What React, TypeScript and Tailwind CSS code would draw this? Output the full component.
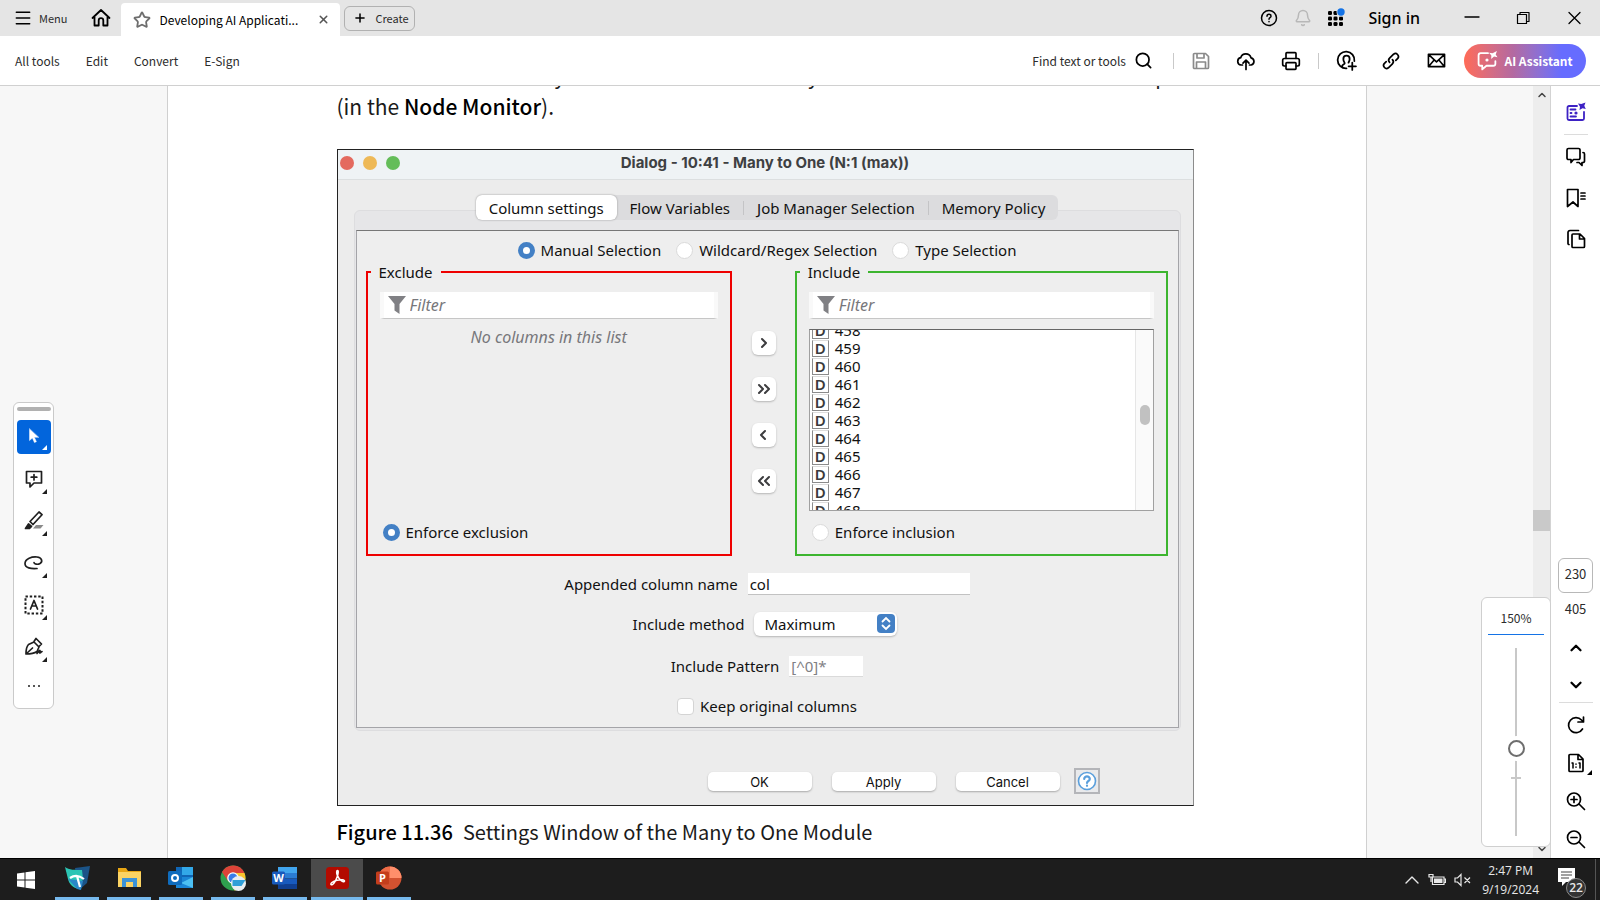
import React, { useState } from 'react';
import { Menu, Star, X, Plus, Search, Bell, Printer, ChevronUp, ChevronDown } from 'lucide-react';

type IconProps = {
  size?: number;
  box?: string;
  stroke?: number;
  className?: string;
  children: React.ReactNode;
};

const Icon: React.FC<IconProps> = ({ size = 20, box = '0 0 20 20', stroke = 1.7, className = '', children }) => (
  <svg
    width={size}
    height={size}
    viewBox={box}
    fill="none"
    stroke="currentColor"
    strokeWidth={stroke}
    strokeLinecap="round"
    strokeLinejoin="round"
    className={`shrink-0 ${className}`}
    aria-hidden="true"
  >
    {children}
  </svg>
);

const uiFont = "font-['Noto_Sans_CJK_SC','Open_Sans',sans-serif]";
const dialogFont = "font-['Noto_Sans','Open_Sans',sans-serif]";

const columns = ['458', '459', '460', '461', '462', '463', '464', '465', '466', '467', '468'];

const TitleBar: React.FC = () => (
  <header className="flex h-9 shrink-0 items-center bg-[#e5e5e5] pl-[13px] text-[#2c2c2c]">
    <button className="flex items-center gap-1.5 text-[11px]">
      <Menu size={20} strokeWidth={1.8} className="text-black" />
      Menu
    </button>
    <button aria-label="Home" className="ml-6 text-black">
      <Icon size={20} stroke={1.8}>
        <path d="M1.500 10 10 2l8.500 8M3.500 9v8.500h4.200v-5a2.300 2.300 0 0 1 4.600 0v5h4.200V9" />
      </Icon>
    </button>
    <div className="ml-2.5 flex h-[33px] w-[219px] items-center self-end rounded-t bg-white pl-3">
      <Star size={18} strokeWidth={2.4} className="text-[#6e6e6e]" />
      <span className="ml-2 flex-1 truncate text-xs leading-5 text-black">Developing AI Applicati...</span>
      <button aria-label="Close tab" className="mr-2.5 text-[#555]">
        <X size={13} strokeWidth={2.8} />
      </button>
    </div>
    <button className="ml-1 flex h-[25px] w-[71px] items-center gap-2 rounded-md border border-[#b1b1b1] pl-2 text-[11px]">
      <Plus size={14} strokeWidth={2.6} className="text-black" />
      Create
    </button>
    <div className="ml-auto flex items-center">
      <button aria-label="Help" className="mr-4 text-black">
        <Icon size={18} box="0 0 18 18" stroke={1.5}>
          <circle cx="9" cy="9" r="7.500" />
          <path d="M7 7.200c0-2.600 4-2.600 4 0C11 8.700 9 8.700 9 10.200M9 12.500v.3" />
        </Icon>
      </button>
      <button aria-label="Notifications" className="mr-3.5 text-[#b8b8b8]">
        <Bell size={18} strokeWidth={2} />
      </button>
      <button aria-label="Apps" className="mr-[22px] text-black">
        <svg width="20" height="20" viewBox="0 0 20 20" fill="currentColor" aria-hidden="true">
          {[3, 8.5, 14].map(y =>
            [2, 7.5, 13].map(x => <rect key={`${x}-${y}`} x={x} y={y} width="4" height="4" rx="1.300" />)
          )}
          <circle cx="15" cy="4" r="4.500" fill="#e5e5e5" />
          <circle cx="15" cy="4" r="3.700" fill="#1473e6" />
        </svg>
      </button>
      <button className="mr-11 font-['Noto_Sans',sans-serif] text-base leading-5 font-medium text-black">Sign in</button>
      <button aria-label="Minimize" className="mr-9 text-black">
        <Icon size={16} box="0 0 16 16" stroke={1.3}>
          <path d="M1 7h14" />
        </Icon>
      </button>
      <button aria-label="Restore" className="mr-9 text-black">
        <Icon size={15} box="0 0 15 15" stroke={1.2}>
          <path d="M1.500 3.500h9v9h-9zM4 3.500v-2h9v9h-2.500" />
        </Icon>
      </button>
      <button aria-label="Close" className="mr-[18px] text-black">
        <Icon size={15} box="0 0 15 15" stroke={1.3}>
          <path d="m2 1.500 11 11M13 1.500l-11 11" />
        </Icon>
      </button>
    </div>
  </header>
);

const Toolbar: React.FC = () => (
  <div className="flex h-[50px] shrink-0 items-center border-b border-[#d0d0d0] bg-white pr-3.5 pl-[15px] text-xs text-[#2c2c2c]">
    <nav className="flex gap-[26px]">
      <button>All tools</button>
      <button>Edit</button>
      <button>Convert</button>
      <button>E-Sign</button>
    </nav>
    <div className="ml-auto flex items-center text-black">
      <button className="flex items-center gap-2 text-[#2c2c2c]">
        Find text or tools
        <Search size={19} strokeWidth={2.2} className="text-black" />
      </button>
      <span className="mr-[17px] ml-5 h-4 w-px bg-[#c9c9c9]" />
      <button aria-label="Save" className="text-[#8a8a8a]">
        <Icon>
          <path d="M2.500 3.500a1 1 0 0 1 1-1h11l3 3v11a1 1 0 0 1-1 1h-13a1 1 0 0 1-1-1zM6 2.500V7h7V2.500M5.500 17.500V11h9v6.500" />
        </Icon>
      </button>
      <button aria-label="Upload" className="ml-[25px]">
        <Icon>
          <path d="M6.500 14H5A3.700 3.700 0 0 1 4.700 6.700 5.400 5.400 0 0 1 15 6.800 3.700 3.700 0 0 1 15.200 14h-1.700M10 18.500V9.500M7 12.200l3-3 3 3" />
        </Icon>
      </button>
      <button aria-label="Print" className="ml-[25px]">
        <Printer size={20} strokeWidth={2} />
      </button>
      <span className="mx-[17px] h-4 w-px bg-[#c9c9c9]" />
      <button aria-label="Share">
        <Icon size={21}>
          <path d="M10 17.500a8 8 0 1 1 7.500-7M6 16v-1.200c0-.8 2.300-1.400 2.300-2.300 0-.6-1.300-1.500-1.300-4C7 4.300 13 4.300 13 8.500c0 2-.9 2.900-1.100 3.600M15.500 12v7M12 15.500h7" />
        </Icon>
      </button>
      <button aria-label="Link" className="ml-6">
        <Icon>
          <path d="M8.600 11.400a3 3 0 0 1 0-4.200l4-4a3 3 0 0 1 4.200 4.200l-2 2M11.400 8.600a3 3 0 0 1 0 4.200l-4 4a3 3 0 0 1-4.200-4.200l2-2" />
        </Icon>
      </button>
      <button aria-label="Email" className="ml-[26px]">
        <Icon size={19}>
          <path d="M1.500 3.500h17v13h-17zM2 4l8 7.500L18 4M2 16l5.500-6.500M18 16l-5.500-6.500" />
        </Icon>
      </button>
      <button className="ml-[18px] flex h-[34px] w-[122px] items-center justify-center gap-1.5 rounded-full bg-linear-to-r from-[#ff6a55] via-[#b469a0] via-40% to-[#666cff] to-80% text-xs font-bold text-white">
        <Icon size={21}>
          <path d="M10.500 3h-7a2 2 0 0 0-2 2v8a2 2 0 0 0 2 2H5v3.500L9 15h6.500a2 2 0 0 0 2-2v-2.500" />
          <path d="m19 1-1.200 3.200L19.500 7l-3.300-.7L13.500 8.500l.2-3.300L11.500 2.500l3.300.6z" fill="currentColor" stroke="none" />
          <circle cx="9.500" cy="9.500" r="1.500" fill="currentColor" stroke="none" />
        </Icon>
        AI Assistant
      </button>
    </div>
  </div>
);

const paletteTools = [
  {
    label: 'Comment',
    art: <path d="M2.500 2.500h15v11.500H10L6 18v-4H2.500zM10 5.500v5.500M7.200 8.200h5.600" />
  },
  {
    label: 'Highlight',
    art: (
      <>
        <path d="M9 17.500 12 14h7.500l-3 3.500z" fill="#8a8a8a" stroke="none" />
        <path d="m6 10.500 9-9.500 3 2.700-9 9.800z" />
        <path d="M4.500 13 7.500 15.500 5.500 17.500H1.500z" fill="currentColor" />
      </>
    )
  },
  {
    label: 'Draw',
    art: <path d="M13 15.500C7 16 1 15 1 10.500 1 5.500 8 3.500 13 4s6 4.500 3 6.500c-2.500 1.500-6 .5-6-1" />
  },
  {
    label: 'Text box',
    art: (
      <>
        <path d="M1.500 1.500h17v17h-17z" strokeDasharray="2.400 1.850" strokeLinecap="butt" strokeWidth="2" />
        <path d="m6.500 14 3.500-8.500 3.500 8.500M7.700 11h4.600" />
      </>
    )
  },
  {
    label: 'Sign',
    art: (
      <path d="M2 17c0-4 .5-7.500 2.500-9.500L10 5l5 5-2 4.500C10 16.500 6 17 2 17l6.500-6M10 4.500l2-3 5.500 5.500-2.500 2.500M13 16.500c2-2 2.500-3.500 3-3s-1 2.500 0 2.500 1-1.500 2-1.500" />
    )
  }
];

const ToolPalette: React.FC = () => (
  <div className="absolute top-[316px] left-[13px] flex w-[41px] flex-col items-center rounded-md border border-[#cacaca] bg-white pb-1 text-[#1f1f1f]">
    <span className="mt-1 h-1 w-[34px] rounded-full bg-[#b1b1b1]" />
    <button aria-label="Select" className="relative mt-[9px] mb-1 flex size-[34px] items-center justify-center rounded-sm bg-[#0265dc] text-white">
      <Icon size={18}>
        <path d="M5 1v13l3.200-2.800 2.300 5 2.200-1-2.300-4.800H15z" fill="currentColor" strokeWidth="0.500" />
      </Icon>
      <svg width="5" height="5" className="absolute right-1 bottom-1" aria-hidden="true">
        <path d="M5 0v5H0z" fill="currentColor" />
      </svg>
    </button>
    {paletteTools.map(tool => (
      <button key={tool.label} aria-label={tool.label} className="relative flex h-[42px] w-[34px] items-center justify-center">
        <Icon size={20}>{tool.art}</Icon>
        <svg width="5" height="5" className="absolute right-1 bottom-1.5" aria-hidden="true">
          <path d="M5 0v5H0z" fill="currentColor" />
        </svg>
      </button>
    ))}
    <button aria-label="More tools" className="flex h-9 items-center">
      <svg width="14" height="4" fill="currentColor" aria-hidden="true">
        <circle cx="2" cy="2" r="1" />
        <circle cx="7" cy="2" r="1" />
        <circle cx="12" cy="2" r="1" />
      </svg>
    </button>
  </div>
);

const ZoomPopup: React.FC = () => {
  const [zoom, setZoom] = useState(46);

  return (
    <div className="absolute right-0 bottom-[11px] flex h-[250px] w-[70px] translate-x-px flex-col items-center rounded-md border border-[#cfcfcf] bg-white">
      <input
        aria-label="Zoom level"
        defaultValue="150%"
        className="mt-2 h-[29px] w-14 border-b border-[#1473e6] pb-1.5 text-center text-xs text-[#2c2c2c] outline-none"
      />
      <div className="relative mt-[13px] flex">
        <span className="absolute top-[129px] left-[4px] h-0.5 w-2.5 bg-[#c8c8c8]" />
        <input
          type="range"
          aria-label="Zoom"
          value={zoom}
          onChange={e => setZoom(Number(e.target.value))}
          className="relative h-[188px] w-[18px] appearance-none bg-[linear-gradient(#c8c8c8,#c8c8c8)] bg-[length:2px_100%] bg-center bg-no-repeat [direction:rtl] [writing-mode:vertical-lr] [&::-webkit-slider-thumb]:size-[17px] [&::-webkit-slider-thumb]:appearance-none [&::-webkit-slider-thumb]:rounded-full [&::-webkit-slider-thumb]:border-2 [&::-webkit-slider-thumb]:border-[#6e6e6e] [&::-webkit-slider-thumb]:bg-white [&::-webkit-slider-thumb]:shadow-[0_0_0_4px_white]"
        />
      </div>
    </div>
  );
};

type RadioProps = {
  name: string;
  label: string;
  checked: boolean;
  onChange: () => void;
};

const Radio: React.FC<RadioProps> = ({ name, label, checked, onChange }) => (
  <label className="flex h-5 items-center gap-1.5">
    <input
      type="radio"
      name={name}
      checked={checked}
      onChange={onChange}
      className="size-[17px] appearance-none rounded-full border border-[#dadada] bg-white checked:border-[5px] checked:border-[#4380c5]"
    />
    {label}
  </label>
);

const FilterBox: React.FC<{ label: string }> = ({ label }) => (
  <div className="flex h-[27px] items-center border-x-4 border-b border-x-[#f9f9f9] border-b-[#c6c6c6] bg-white pl-1">
    <svg width="18" height="18" viewBox="0 0 18 18" fill="#808084" className="shrink-0" aria-hidden="true">
      <path d="M0 0h18l-6.500 8v10L6.500 14.500V8z" />
    </svg>
    <input
      aria-label={label}
      placeholder="Filter"
      className="ml-1 w-full min-w-0 text-base outline-none placeholder:text-[#77777b] placeholder:italic"
    />
  </div>
);

const MoveButton: React.FC<{ label: string; d: string }> = ({ label, d }) => (
  <button aria-label={label} className="flex size-6 items-center justify-center rounded-md bg-white text-[#3c3c3e] shadow-[0_1px_2px_#b5b5b5]">
    <Icon size={16} box="0 0 16 16" stroke={2}>
      <path d={d} />
    </Icon>
  </button>
);

const tabs = ['Column settings', 'Flow Variables', 'Job Manager Selection', 'Memory Policy'];

const SettingsDialog: React.FC = () => {
  const [tab, setTab] = useState(tabs[0]);
  const [mode, setMode] = useState('manual');
  const [enforce, setEnforce] = useState('exclusion');
  const [columnName, setColumnName] = useState('col');
  const [keep, setKeep] = useState(false);

  return (
    <section className={`mt-7 border border-[#222] border-r-[#8c8c8c] bg-[#ececec] ${dialogFont} text-[15px] leading-5 text-[#111]`}>
      <div className="relative flex h-[30px] items-center justify-center border-b border-[#dcdfe0] bg-[#eff3f5] pb-1">
        <div className="absolute left-0.5 flex gap-[9px]">
          <button aria-label="Close dialog" className="size-3.5 rounded-full bg-[#e46a5f]" />
          <button aria-label="Minimize dialog" className="size-3.5 rounded-full bg-[#eeb957]" />
          <button aria-label="Zoom dialog" className="size-3.5 rounded-full bg-[#64bd59]" />
        </div>
        <h2 className="font-['Inter',sans-serif] text-[15px] font-bold text-[#3e4042]">Dialog - 10:41 - Many to One (N:1 (max))</h2>
      </div>

      <div className="flex flex-col pt-[15px] pr-3 pl-4">
        <div role="tablist" className="z-10 -mb-2.5 flex h-[25px] items-center self-center rounded-md bg-[#dcdcde]">
          {tabs.map((name, i) => (
            <React.Fragment key={name}>
              {i > 1 && <span className="h-3.5 w-px bg-[#c4c4c6]" />}
              <button
                role="tab"
                aria-selected={tab === name}
                onClick={() => setTab(name)}
                className={`h-[25px] rounded-md px-[13px] ${tab === name ? 'bg-white shadow-[0_0_2px_#8e8e8e]' : ''}`}
              >
                {name}
              </button>
            </React.Fragment>
          ))}
        </div>

        <div className="rounded-md border border-[#dddddf] bg-[#e6e6e8] px-px pt-[19px] pb-0.5">
          <div className="border border-[#a4a4a8] border-t-[#777] bg-[#eeeeee] pt-[9px] pb-[9px]">
            <div className="flex justify-center gap-[15px]">
              <Radio name="mode" label="Manual Selection" checked={mode === 'manual'} onChange={() => setMode('manual')} />
              <Radio name="mode" label="Wildcard/Regex Selection" checked={mode === 'wildcard'} onChange={() => setMode('wildcard')} />
              <Radio name="mode" label="Type Selection" checked={mode === 'type'} onChange={() => setMode('type')} />
            </div>

            <div className="mt-0.5 flex pr-2.5 pl-[9px]">
              <fieldset className="min-w-0 flex-[366] border-2 border-[#ee0000] px-3 pb-3">
                <legend className="ml-[-9px] px-2">Exclude</legend>
                <div className="pt-2.5">
                  <FilterBox label="Filter excluded columns" />
                  <p className="h-[203px] pt-2 text-center text-base leading-5 text-[#77777b] italic">No columns in this list</p>
                  <div className="pl-[3px]">
                    <Radio name="enforce" label="Enforce exclusion" checked={enforce === 'exclusion'} onChange={() => setEnforce('exclusion')} />
                  </div>
                </div>
              </fieldset>

              <div className="flex w-[63px] flex-col items-center gap-[22px] pt-[69px] pl-0.5">
                <MoveButton label="Include selected" d="m6 4 4 4-4 4" />
                <MoveButton label="Include all" d="m3 4 4 4-4 4M9 4l4 4-4 4" />
                <MoveButton label="Exclude selected" d="M9 4 5 8l4 4" />
                <MoveButton label="Exclude all" d="M7 4 3 8l4 4M13 4 9 8l4 4" />
              </div>

              <fieldset className="min-w-0 flex-[373] border-2 border-[#3db52f] px-3 pb-3">
                <legend className="ml-[-9px] px-2">Include</legend>
                <div className="pt-2.5">
                  <FilterBox label="Filter included columns" />
                  <div className="mt-2.5 mb-[11px] flex h-[182px] overflow-hidden border border-[#a0a0a0] border-t-[#666] bg-white">
                    <ul className="-mt-[9px] flex-1 pl-0.5">
                      {columns.map(col => (
                        <li key={col} className="flex h-[18px] items-center gap-1.5">
                          <span className="flex h-[17px] w-[17px] items-center justify-center border border-[#8b8b8b] border-t-[#ddd] text-[15px] font-semibold text-[#3a3a3c]">
                            D
                          </span>
                          {col}
                        </li>
                      ))}
                    </ul>
                    <div className="w-[18px] border-l border-[#e6e6e6] bg-[#fafafa] pt-[75px] pl-1">
                      <div className="h-5 w-2.5 rounded-full bg-[#c1c1c1]" />
                    </div>
                  </div>
                  <div className="pl-[3px]">
                    <Radio name="enforce" label="Enforce inclusion" checked={enforce === 'inclusion'} onChange={() => setEnforce('inclusion')} />
                  </div>
                </div>
              </fieldset>
            </div>

            <div className="mt-4 flex flex-col items-center gap-4">
              <label className="flex h-6 items-center gap-2.5">
                Appended column name
                <input
                  value={columnName}
                  onChange={e => setColumnName(e.target.value)}
                  className="h-[22px] w-[222px] border-b border-[#c2c2c2] bg-white px-0.5 outline-none"
                />
              </label>
              <label className="flex h-6 items-center gap-2.5 pr-1">
                Include method
                <span className="relative">
                  <select className="block h-6 w-[143px] appearance-none rounded-md bg-white pl-2.5 shadow-[0_1px_2px_#b5b5b5] outline-none">
                    <option>Maximum</option>
                    <option>Minimum</option>
                    <option>Mean</option>
                  </select>
                  <svg width="18" height="19" viewBox="0 0 18 19" className="pointer-events-none absolute top-0.5 right-0.5" aria-hidden="true">
                    <rect width="18" height="19" rx="4" fill="#4380c5" />
                    <path d="M5.500 7.500 9 4l3.500 3.500M5.500 11.500 9 15l3.500-3.500" fill="none" stroke="#fff" strokeWidth="1.800" strokeLinecap="round" />
                  </svg>
                </span>
              </label>
              <label className="mt-0.5 flex h-6 items-center gap-2.5">
                Include Pattern
                <input
                  disabled
                  value="[^0]*"
                  className="h-[21px] w-[74px] border-b border-[#dadada] bg-white px-0.5 text-[#808084]"
                />
              </label>
              <label className="flex h-6 items-center gap-1.5">
                <input
                  type="checkbox"
                  checked={keep}
                  onChange={e => setKeep(e.target.checked)}
                  className="size-[17px] appearance-none rounded border border-[#d4d4d4] bg-white checked:bg-[#4380c5]"
                />
                Keep original columns
              </label>
            </div>
          </div>
        </div>
      </div>

      <div className="mt-[37px] flex items-center justify-end pr-[93px] pb-[11px] font-['Inter',sans-serif] text-[13px]">
        {['OK', 'Apply', 'Cancel'].map(name => (
          <button key={name} className="mr-5 h-[19px] w-[104px] rounded-[5px] bg-white shadow-[0_1px_2px_#a8a8a8]">
            {name}
          </button>
        ))}
        <a href="#help" aria-label="Dialog help" className="ml-[-6px] flex size-[26px] items-center justify-center border-2 border-[#b4b5b9] bg-[#e9eaec] text-[#5a9fdc]">
          <Icon size={20} stroke={1.6}>
            <circle cx="10" cy="10" r="8.500" fill="#fff" />
            <path d="M7.200 8c0-3.600 5.600-3.600 5.600 0 0 2-2.800 2-2.800 4M10 14.500v.3" strokeWidth="2.200" />
          </Icon>
        </a>
      </div>
    </section>
  );
};

const RightRail: React.FC = () => (
  <aside className="flex w-[50px] shrink-0 flex-col items-center border-l border-[#d3d3d3] bg-white pt-4 pb-[9px] text-black">
    <button aria-label="Generative summary" className="text-[#3d22c4]">
      <Icon size={20} stroke={1.8}>
        <path d="M11 4H3a1.500 1.500 0 0 0-1.500 1.500v11A1.500 1.500 0 0 0 3 18h13.500a1.500 1.500 0 0 0 1.500-1.500V10M4.500 7.500h5M4.500 11h1M4.500 14.500H10" />
        <path d="m19.500.500-1.200 3.200L19.800 7l-3.300-.7-3 1.700.5-3.200L12 1.500l3.300.6z" fill="currentColor" stroke="none" />
        <circle cx="10" cy="11" r="1.600" fill="currentColor" stroke="none" />
      </Icon>
    </button>
    <span className="mt-3 h-px w-6 bg-[#dcdcdc]" />
    <button aria-label="Comments" className="mt-3">
      <Icon size={20}>
        <path d="M2.500 1.500h10a1.500 1.500 0 0 1 1.500 1.500v8a1.500 1.500 0 0 1-1.500 1.500H7.500L5 15.500v-3H2.500A1.500 1.500 0 0 1 1 11V3a1.500 1.500 0 0 1 1.500-1.500zM17 5.500a1.500 1.500 0 0 1 1.500 1.500v7a1.500 1.500 0 0 1-1.500 1.500h-1v3L13 15.500h-2" />
      </Icon>
    </button>
    <button aria-label="Bookmarks" className="mt-[21px]">
      <Icon size={20}>
        <path d="M1.500 1.500h10.500v17l-5-4.500-5.500 4.500zM15 5h4M15 8h4M15 11h4" />
      </Icon>
    </button>
    <button aria-label="Pages" className="mt-[21px]">
      <Icon size={20}>
        <path d="M7 5h7l4.500 4.500v8a1 1 0 0 1-1 1H7a1 1 0 0 1-1-1V6a1 1 0 0 1 1-1zM13.500 5v5h5M3 15.500a1 1 0 0 1-1-1v-11a2 2 0 0 1 2-2h8.500" />
      </Icon>
    </button>

    <input
      aria-label="Page number"
      defaultValue="230"
      className="mt-auto h-[35px] w-[35px] rounded-md border border-[#b8b8b8] pb-1 text-center text-[13px] text-[#2c2c2c] outline-none"
    />
    <span className="mt-1.5 text-[13px] leading-5 text-[#2c2c2c]">405</span>
    <button aria-label="Previous page" className="mt-5">
      <ChevronUp size={18} strokeWidth={3} />
    </button>
    <button aria-label="Next page" className="mt-[19px]">
      <ChevronDown size={18} strokeWidth={3} />
    </button>
    <span className="mt-2 h-px w-[34px] bg-[#dcdcdc]" />
    <button aria-label="Rotate" className="mt-3">
      <Icon size={20} stroke={1.7}>
        <path d="M16.500 14A7.500 7.500 0 1 1 15.500 5l1.500 1.500M17.500 2v5h-5.500" />
      </Icon>
    </button>
    <button aria-label="Actual size" className="relative mt-[18px]">
      <Icon size={20}>
        <path d="M3 2.500A1 1 0 0 1 4 1.500h8.500L17 6v11.500a1 1 0 0 1-1 1H4a1 1 0 0 1-1-1zM12 1.500v5h5" />
        <path d="M6 10h1v5M13 10h1v5M10 11v.2M10 14v.2" strokeWidth="1.500" />
      </Icon>
      <svg width="5" height="5" className="absolute -right-1.5 -bottom-0.5" aria-hidden="true">
        <path d="M5 0v5H0z" />
      </svg>
    </button>
    <button aria-label="Zoom in" className="mt-[18px]">
      <Icon size={20}>
        <path d="M14.500 8.500a6.500 6.500 0 1 1-13 0 6.500 6.500 0 0 1 13 0zM13 13l5.500 5.500M8 5.500v6M5 8.500h6" />
      </Icon>
    </button>
    <button aria-label="Zoom out" className="mt-[18px]">
      <Icon size={20}>
        <path d="M14.500 8.500a6.500 6.500 0 1 1-13 0 6.500 6.500 0 0 1 13 0zM13 13l5.500 5.500M5 8.500h6" />
      </Icon>
    </button>
  </aside>
);

const taskApps = [
  {
    label: 'Folder manager',
    art: (
      <>
        <path d="M11 3 26 1l-3 17-8 7z" fill="#1b5488" />
        <path d="M1 2c4 3 10 3 17 3l1 9-4 10C9 23 5 19 4 14z" fill="#2cc5b4" />
        <path d="m4 14 9 10 4 1 2-9z" fill="#2a87c8" />
        <path d="M6 13c4-3 9-3 14 1M13 11l3 11" stroke="#fff" strokeWidth="2.200" fill="none" />
      </>
    )
  },
  {
    label: 'File Explorer',
    art: (
      <>
        <path d="M2 3h8l2 3h13v16H2z" fill="#e8a614" />
        <path d="M2 7h23v15H2z" fill="#fbd363" />
        <path d="M6 22v-9h15v9h-4v-5h-7v5z" fill="#3c93d6" />
      </>
    )
  },
  {
    label: 'Outlook',
    art: (
      <>
        <path d="M8 2h17v21H8z" fill="#1066b5" />
        <path d="M14 2h11v8H14z" fill="#32a8e8" />
        <path d="M8 12h17v11H8z" fill="#1a86d6" />
        <path d="m25 12-12 6 12 5z" fill="#4cc0f2" />
        <rect x="0" y="6" width="14" height="14" rx="1.500" fill="#0f6cbd" />
        <circle cx="7" cy="13" r="3" fill="none" stroke="#fff" strokeWidth="2" />
      </>
    )
  },
  {
    label: 'Chrome',
    art: (
      <>
        <circle cx="13" cy="13" r="12.500" fill="#2ea04e" />
        <path d="M2 7a12.500 12.500 0 0 1 22.500 1H13l-5 8z" fill="#dd4338" />
        <path d="M24.500 8A12.500 12.500 0 0 1 14 25.500l5-12L16 8z" fill="#fbc42d" />
        <circle cx="13" cy="13" r="5.800" fill="#fff" />
        <circle cx="13" cy="13" r="4.500" fill="#3a7de8" />
        <circle cx="18.500" cy="18.500" r="7.500" fill="#e9eef1" />
        <path d="M12.500 15h13l-4 6h-9z" fill="#2f9fd8" />
      </>
    )
  },
  {
    label: 'Word',
    art: (
      <>
        <path d="M6 2h19v6H6z" fill="#41a5ee" />
        <path d="M6 8h19v5.500H6z" fill="#2b7cd3" />
        <path d="M6 13.500h19V19H6z" fill="#185abd" />
        <path d="M6 19h19v5H6z" fill="#103f91" />
        <rect x="0" y="6.500" width="13" height="13" rx="1.500" fill="#185abd" />
        <text x="6.500" y="17" textAnchor="middle" fontSize="11" fontWeight="700" fill="#fff">W</text>
      </>
    )
  },
  {
    label: 'Acrobat',
    art: (
      <>
        <rect x="2" y="2" width="23" height="22" rx="3.500" fill="#b30b00" />
        <path
          d="M7 19.500c-1-1.500 3-3.500 6-4.200 4-.9 8-.6 7.500 1-.8 1.700-5.500-1.600-7.200-6-.9-2.500-.9-4.800.2-4.800 1.200 0 .8 3-.3 6.300-1.600 4.700-4.700 9.200-6.200 7.700z"
          fill="none"
          stroke="#fff"
          strokeWidth="1.500"
        />
      </>
    )
  },
  {
    label: 'PowerPoint',
    art: (
      <>
        <circle cx="14" cy="13" r="11.500" fill="#d35230" />
        <path d="M14 1.500A11.500 11.500 0 0 1 25.500 13H14z" fill="#ff8f6b" />
        <path d="M14 1.500A11.500 11.500 0 0 0 2.500 13H14z" fill="#ed6c47" />
        <rect x="0" y="6.500" width="13" height="13" rx="1.500" fill="#c43e1c" />
        <text x="6.500" y="17" textAnchor="middle" fontSize="11" fontWeight="700" fill="#fff">P</text>
      </>
    )
  }
];

const Taskbar: React.FC = () => (
  <footer className="flex h-[42px] shrink-0 items-stretch border-t border-black bg-[#1d1d1d] font-['Open_Sans',sans-serif] text-white">
    <button aria-label="Start" className="flex w-[51px] items-center justify-center">
      <svg width="18" height="18" viewBox="0 0 18 18" fill="#fff" aria-hidden="true">
        <path d="M0 2.500 7.500 1.500v7H0zM8.500 1.300 18 0v8.500H8.500zM0 9.500h7.500v7L0 15.500zM8.500 9.500H18V18l-9.500-1.300z" />
      </svg>
    </button>
    {taskApps.map(app => (
      <button
        key={app.label}
        aria-label={app.label}
        className={`flex w-[52px] flex-col items-center justify-between pt-1.5 ${app.label === 'Acrobat' ? 'bg-[#4b4b4b]' : 'px-1'}`}
      >
        <svg width="26" height="26" viewBox="0 0 26 26" aria-hidden="true">
          {app.art}
        </svg>
        <span className="h-[3px] w-full bg-[#76b9ed]" />
      </button>
    ))}
    <div className="ml-auto flex items-center text-[#e8e8e8]">
      <button aria-label="Show hidden icons" className="mr-2">
        <Icon size={16} box="0 0 16 16" stroke={1.4}>
          <path d="m2 11 6-6 6 6" />
        </Icon>
      </button>
      <svg width="18" height="14" viewBox="0 0 18 14" fill="none" stroke="currentColor" strokeWidth="1.200" className="mr-2" aria-hidden="true">
        <path d="M4.500 4h11.500v7.500h-11.500zM16 6h1.500v3.500H16M1 1.500h4v2.500H1zM3 4v5" />
        <path d="M6 5.500h8.500V10H6z" fill="currentColor" stroke="none" />
      </svg>
      <svg width="18" height="14" viewBox="0 0 18 14" fill="none" stroke="currentColor" strokeWidth="1.200" className="mr-2.5" aria-hidden="true">
        <path d="M1 5h2.500L7 1.500v11L3.500 9H1zM10.500 4.500l5.500 5.500M16 4.500 10.500 10" />
      </svg>
      <div className="mr-[19px] text-center text-xs leading-[19px]">
        <div>2:47 PM</div>
        <div>9/19/2024</div>
      </div>
      <button aria-label="22 notifications" className="relative mr-[9px] h-8 w-[28px]">
        <svg width="17" height="19" viewBox="0 0 17 19" className="absolute top-1 left-0" aria-hidden="true">
          <path d="M0 0h17v14H8l-4 4v-4H0z" fill="#fff" />
          <path d="M3 4h11M3 7h11M3 10h8" stroke="#444" />
        </svg>
        <span className="absolute right-0 -bottom-0.5 flex size-5 items-center justify-center rounded-full border border-[#8a8a8a] bg-[#333] text-xs font-semibold">
          22
        </span>
      </button>
      <span className="mr-1 h-[41px] w-px bg-[#555]" />
    </div>
  </footer>
);

export default function App() {
  return (
    <div className={`flex h-screen flex-col overflow-hidden bg-white ${uiFont}`}>
      <TitleBar />
      <Toolbar />
      <div className="flex min-h-0 flex-1">
        <main className="relative flex min-w-0 flex-1 bg-[#f7f7f7]">
          <div className="flex min-w-0 flex-1 justify-center overflow-hidden">
            <article className="w-full max-w-[1200px] border-x border-[#d0d0d0] bg-white pr-[172px] pl-[169px] text-xl leading-[30px] text-[#1a1a1a]">
              {/* tail of the paragraph line that is scrolled out of view */}
              <p className="-mt-[25px] flex h-[30px] pl-[218px]" aria-hidden="true">
                <span>y</span>
                <span className="ml-[243px]">y</span>
                <span className="ml-[337px]">p</span>
              </p>
              <p className="text-[21px]">
                (in the <b className="font-medium text-black">Node Monitor</b>).
              </p>
              <SettingsDialog />
              <p className="mt-[11px]">
                <b className="mr-2.5 font-medium text-black">Figure 11.36</b>
                Settings Window of the Many to One Module
              </p>
            </article>
          </div>
          <div className="flex w-[17px] shrink-0 flex-col items-center bg-[#ededed] pt-[3px] text-[#444]">
            <ChevronUp size={12} strokeWidth={3} />
            <div className="mt-[409px] h-[21px] w-full bg-[#c9c9c9]" />
            <ChevronDown size={12} strokeWidth={3} className="mt-auto mb-[3px]" />
          </div>
          <ToolPalette />
          <ZoomPopup />
        </main>
        <RightRail />
      </div>
      <Taskbar />
    </div>
  );
}
